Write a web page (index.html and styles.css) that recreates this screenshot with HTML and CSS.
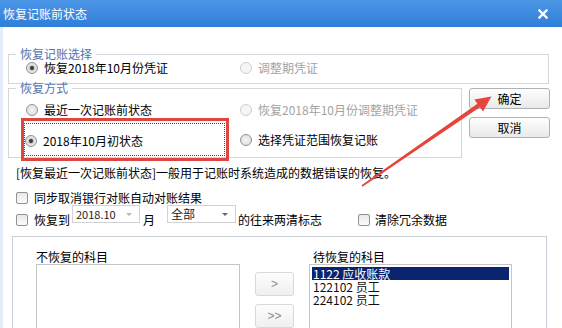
FILE: index.html
```html
<!DOCTYPE html>
<html lang="zh">
<head>
<meta charset="utf-8">
<title>恢复记账前状态</title>
<link rel="stylesheet" href="styles.css">
</head>
<body>
<div class="dialog">
  <div class="titlebar">
    <span class="title">恢复记账前状态</span>
    <svg class="close" width="10" height="10" viewBox="0 0 10 10"><path d="M1.5 1.5 L8.5 8.5 M8.5 1.5 L1.5 8.5" stroke="#fff" stroke-width="2.4" stroke-linecap="square"/></svg>
  </div>
  <div class="content">
    <fieldset class="group g1">
      <legend>恢复记账选择</legend>
      <div class="row">
        <label class="opt c1"><span class="radio checked"></span>恢复2018年10月份凭证</label>
        <label class="opt disabled"><span class="radio"></span>调整期凭证</label>
      </div>
    </fieldset>

    <div class="mid">
      <fieldset class="group g2">
        <legend>恢复方式</legend>
        <div class="row r1">
          <label class="opt c1"><span class="radio"></span>最近一次记账前状态</label>
          <label class="opt disabled"><span class="radio"></span>恢复2018年10月份调整期凭证</label>
        </div>
        <div class="row r2">
          <label class="opt focus"><span class="radio checked"></span>2018年10月初状态</label>
          <label class="opt"><span class="radio"></span>选择凭证范围恢复记账</label>
        </div>
      </fieldset>
      <div class="btns">
        <button class="btn">确定</button>
        <button class="btn">取消</button>
      </div>
    </div>

    <p class="desc">[恢复最近一次记账前状态]一般用于记账时系统造成的数据错误的恢复。</p>

    <label class="chk-row"><span class="check"></span>同步取消银行对账自动对账结果</label>

    <div class="restore-row">
      <span class="check"></span>
      <span class="txt t-restore">恢复到</span>
      <div class="combo month"><span class="val">2018.10</span><span class="caret light"></span></div>
      <span class="txt t-month">月</span>
      <div class="combo scope"><span class="val">全部</span><span class="caret"></span></div>
      <span class="txt">的往来两清标志</span>
      <span class="check c-clean"></span>
      <span class="txt t-clean">清除冗余数据</span>
    </div>

    <div class="subjects">
      <div class="col">
        <div class="lbl">不恢复的科目</div>
        <div class="listbox"></div>
      </div>
      <div class="movers">
        <button class="mv">&gt;</button>
        <button class="mv">&gt;&gt;</button>
      </div>
      <div class="col">
        <div class="lbl r">待恢复的科目</div>
        <div class="listbox">
          <div class="item sel">1122 应收账款</div>
          <div class="item">122102 员工</div>
          <div class="item">224102 员工</div>
        </div>
      </div>
    </div>
  </div>

  <div class="annot"></div>
  <svg class="arrow" width="562" height="328" viewBox="0 0 562 328">
    <polygon points="361.5,185.2 477.4,103.8 474.4,99.6 491.5,96.6 483,111.6 479.9,107.2 362.5,186.8" fill="#e6453c"/>
  </svg>
</div>
</body>
</html>
```

FILE: styles.css
```css
html, body {
  margin: 0;
  padding: 0;
  background: #fff;
}

body {
  font-family: "Noto Sans CJK SC", "Noto Sans", sans-serif;
  font-size: 12px;
  line-height: 14px;
  color: #000;
}

.dialog {
  position: relative;
  width: 562px;
  height: 328px;
  overflow: hidden;
  background: #fff;
}

.titlebar {
  height: 27px;
  background: linear-gradient(#4c96e7, #2f7ed8);
  display: flex;
  align-items: center;
  padding: 0 14px 0 3px;
  color: #fff;
}

.title {
  flex: 1;
  font-size: 12px;
  line-height: 14px;
  padding-top: 1px;
}

.close {
  display: block;
}

.content {
  display: flex;
  flex-direction: column;
  padding-left: 8px;
  box-shadow: inset 3px 0 #e2edf9;
  height: 301px;
}

.group {
  margin: 0;
  padding: 0;
  border: 1px solid #d3d8de;
  min-width: 0;
  box-sizing: border-box;
}

.group legend {
  color: #4f74ad;
  padding: 0 4px;
  line-height: 14px;
}

.g1 {
  margin-top: 20px;
  width: 541px;
  padding: 0 0 8px 17px;
}

.g1 legend {
  margin-left: -10px;
}

.row {
  display: flex;
  align-items: center;
}

.opt {
  display: flex;
  align-items: center;
  gap: 6px;
  white-space: nowrap;
}

.opt.c1 {
  width: 214px;
}

.opt.disabled {
  color: #a3a3a3;
}

.radio {
  position: relative;
  width: 12px;
  height: 12px;
  box-sizing: border-box;
  border-radius: 50%;
  border: 1px solid #8f9194;
  background: radial-gradient(circle, #f3f3f3 0, #dcdcdc 100%);
  flex: none;
}

.radio.checked::after {
  content: "";
  position: absolute;
  left: 3px;
  top: 3px;
  width: 4px;
  height: 4px;
  border-radius: 50%;
  background: #3a3a3a;
  box-shadow: 0 0 1px 1px #bdbdbd;
}

.opt.disabled .radio {
  border-color: #cdcfd2;
  background: #f6f6f6;
}

.mid {
  display: flex;
  align-items: flex-start;
  margin-top: -3px;
}

.g2 {
  width: 454px;
  padding: 0 0 1px 15px;
}

.g2 legend {
  margin-left: -8px;
}

.g2 .r1 {
  margin-top: 8px;
  padding-left: 2px;
}

.g2 .r2 {
  margin-top: 6px;
}

.opt.focus {
  width: 201px;
  height: 33px;
  box-sizing: border-box;
  border: 1px dotted #4a4a4a;
  padding-top: 2px;
  margin-right: 15px;
}

.btns {
  display: flex;
  flex-direction: column;
  gap: 8px;
  margin: 7px 0 0 7px;
}

.btn {
  width: 81px;
  height: 21px;
  padding: 0;
  border: 1px solid #aeb2b7;
  border-radius: 3px;
  background: linear-gradient(#fefefe, #e9e9e9);
  font-family: inherit;
  font-size: 12px;
  line-height: 14px;
  color: #000;
}

.desc {
  margin: 8px 0 0 8px;
  white-space: nowrap;
}

.chk-row {
  display: flex;
  align-items: center;
  gap: 6px;
  margin: 11px 0 0 8px;
}

.check {
  width: 12px;
  height: 12px;
  box-sizing: border-box;
  border: 1px solid #8f9194;
  border-radius: 2px;
  background: linear-gradient(#e9e9e9, #fbfbfb);
  flex: none;
}

.restore-row {
  display: flex;
  align-items: flex-start;
  margin-left: 8px;
  height: 22px;
}

.restore-row .check {
  margin-top: 9px;
}

.restore-row .txt {
  margin-top: 8px;
  white-space: nowrap;
}

.t-restore {
  margin-left: 6px;
}

.combo {
  display: flex;
  align-items: center;
  height: 18px;
  box-sizing: border-box;
  border: 1px solid #d2d2d2;
  background: #fff;
  position: relative;
}

.combo .val {
  flex: 1;
  padding-left: 3px;
  font-size: 11px;
  line-height: 14px;
  color: #222;
}

.month {
  width: 68px;
  margin-left: 2px;
}

.t-month {
  margin-left: 3px;
}

.scope {
  width: 69px;
  margin-left: 12px;
}

.scope .val {
  font-size: 12px;
}

.caret {
  width: 0;
  height: 0;
  border-left: 3px solid transparent;
  border-right: 3px solid transparent;
  border-top: 3px solid #666;
  margin-right: 7px;
}

.caret.light {
  border-top-color: #b8b8b8;
}

.scope + .txt {
  margin-left: 2px;
}

.c-clean {
  margin: 9px 0 0 36px;
}

.t-clean {
  margin-left: 5px;
}

.subjects {
  display: flex;
  align-items: flex-start;
  margin: 9px 0 0 4px;
  width: 535px;
  height: 120px;
  box-sizing: border-box;
  border: 1px solid #c9d0d8;
  padding: 13px 0 0 23px;
  flex: none;
}

.col {
  display: flex;
  flex-direction: column;
}

.lbl {
  line-height: 14px;
}

.lbl.r {
  padding-left: 4px;
}

.listbox {
  width: 204px;
  height: 100px;
  box-sizing: border-box;
  border: 1px solid #c5c5c5;
  background: #fff;
  padding: 2px;
}

.col:last-child .listbox {
  width: 203px;
}

.item {
  height: 13px;
  line-height: 13px;
  font-size: 12px;
  padding-left: 1px;
  white-space: nowrap;
  color: #111;
}

.item.sel {
  background: #0b2470;
  color: #fff;
}

.movers {
  display: flex;
  flex-direction: column;
  gap: 8px;
  margin: 22px 15px 0 15px;
}

.mv {
  width: 39px;
  height: 24px;
  padding: 0;
  border: 1px solid #d6d8da;
  border-radius: 3px;
  background: linear-gradient(#fdfdfd, #f0f0f0);
  font-family: "Liberation Sans", sans-serif;
  font-size: 12px;
  color: #8c8c8c;
}

.annot {
  position: absolute;
  left: 21px;
  top: 118px;
  width: 208px;
  height: 43px;
  box-sizing: border-box;
  border: 3px solid #df463f;
}

.arrow {
  position: absolute;
  left: 0;
  top: 0;
  pointer-events: none;
}
```
